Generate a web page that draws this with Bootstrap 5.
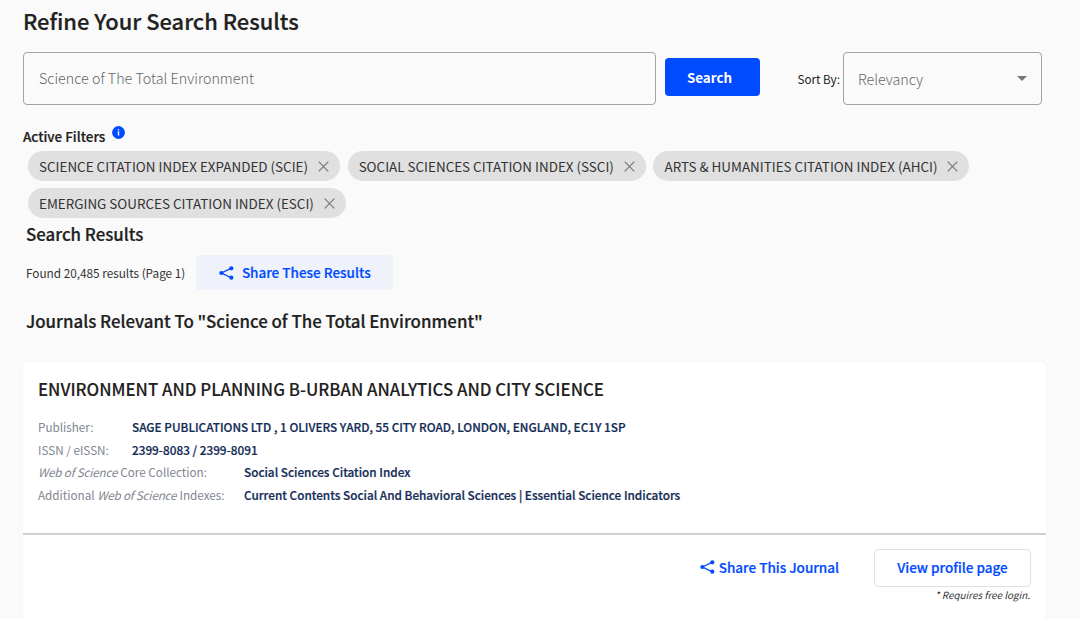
<!DOCTYPE html>
<html lang="en">
<head>
<meta charset="utf-8">
<meta name="viewport" content="width=device-width, initial-scale=1">
<title>Journal search results</title>
<link href="https://cdn.jsdelivr.net/npm/bootstrap@5.3.0/dist/css/bootstrap.min.css" rel="stylesheet">
<style>
body{background:#fafafa;color:#212121;font-family:"Noto Sans CJK SC",sans-serif;font-size:11.7px;overflow:hidden;height:619px}
.page{padding:6px 33px 0 23px}
.page h1,.page h2,.filters-label,.meta dd,.btn-share span,.share-link span,.btn-profile{-webkit-text-stroke:.22px currentColor}
.page h1{font-size:21.9px;line-height:30px;font-weight:500;margin:0 0 16px}
.page h2{font-size:16.85px;line-height:24px;font-weight:500}
.search-row{height:53px}
.search-box{width:633px;height:53px;border:1px solid #a3a3a3;border-radius:4px;background:#fafafa;padding:0 14px 3px 15px;font-size:14.3px;font-weight:300;color:#666}
.search-box::placeholder{color:#666;opacity:1}
.btn-search{width:95px;height:38px;margin:-4px 37.5px 0 9px;background:#004bff;color:#fff;font-size:13.4px;font-weight:700;border-radius:4px;padding:0 6px 0 0;line-height:36px}
.sort-select{width:199px;height:53px;border:1px solid #a3a3a3;border-radius:4px;padding:0 14px;font-size:14.3px;font-weight:300;color:#666;margin-left:3px}
.filters-label{font-size:13.45px;line-height:20px;height:20px;font-weight:500;margin-top:21px}
.filters-label svg{margin-left:6.5px}
.chips{gap:7px 7.6px;padding-left:5px;margin-top:5px}
.chip{height:30px;border-radius:15px;background:#e0e0e0;font-size:13.43px;padding:0 11px;line-height:29px;color:#333;white-space:nowrap}
.chip svg{margin-left:10px}
.found{color:#333;font-size:11.77px}
.btn-share{width:197px;height:35px;background:#eff2fb;color:#004bff;font-size:13.5px;font-weight:500;border-radius:4px;padding:0;margin-left:11px}
.journal{height:270px;margin-top:29px;border:0;border-radius:4px;background:#fff;box-shadow:0 0 1px rgba(0,0,0,.12);width:1023px}
.journal h3{font-size:16.81px;line-height:24px;font-weight:500;margin:0 0 15px;color:#212121;-webkit-text-stroke:.12px currentColor}
.journal-top{height:173px;padding:15px 15px 0;border-bottom:2px solid #d0d0d0}
.meta{height:22.5px;line-height:22px;white-space:nowrap}
.meta dt{font-weight:400;color:#808690}
.meta dt i{letter-spacing:-.2px;margin-right:.5px}
.meta dd{font-weight:500;font-size:11.78px;color:#132c57;margin:0}
.k1{width:94px}.k2{width:206px}
.journal-foot{padding:14px 15px 0}
.share-link{color:#004bff;font-size:13.5px;font-weight:500;margin:-2px 35px 0 0;text-decoration:none}
.btn-profile{width:157px;height:38px;border:1px solid #e0e0e0;border-radius:4px;background:#fff;color:#004bff;font-size:13.5px;font-weight:500;padding:0 0 2px}
.login-note{font-size:9.85px;line-height:18px;font-style:italic;color:#333;margin:-1px 1px 0 0}
</style>
</head>
<body>
<main class="page">
<h1>Refine Your Search Results</h1>
<div class="search-row d-flex align-items-center">
<input class="search-box" type="text" placeholder="Science of The Total Environment" aria-label="Search">
<button class="btn btn-search border-0">Search</button>
<span class="sort-label">Sort By:</span>
<div class="sort-select d-flex align-items-center justify-content-between"><span>Relevancy</span><svg width="10" height="5" viewBox="0 0 10 5"><path d="M0 0h10L5 5z" fill="#757575"/></svg></div>
</div>
<div class="d-flex filters-label"><span>Active Filters</span>
<svg width="13" height="13" viewBox="0 0 13 13"><circle cx="6.5" cy="6.5" r="6.4" fill="#004bff"/><path d="M6.5 5.4v4.1" fill="none" stroke="#fff" stroke-width="1.4"/><path d="M5.8 3.2h1.4v1.3H5.8z" fill="#fff"/></svg></div>
<div class="chips d-flex flex-wrap">
<div class="chip d-flex align-items-center"><span>SCIENCE CITATION INDEX EXPANDED (SCIE)</span><svg width="11" height="11" viewBox="0 0 11 11"><path d="M.7.7l9.6 9.6M10.3.7L.7 10.3" stroke="#777" stroke-width="1.2"/></svg></div>
<div class="chip d-flex align-items-center"><span>SOCIAL SCIENCES CITATION INDEX (SSCI)</span><svg width="11" height="11" viewBox="0 0 11 11"><path d="M.7.7l9.6 9.6M10.3.7L.7 10.3" stroke="#777" stroke-width="1.2"/></svg></div>
<div class="chip d-flex align-items-center"><span>ARTS &amp; HUMANITIES CITATION INDEX (AHCI)</span><svg width="11" height="11" viewBox="0 0 11 11"><path d="M.7.7l9.6 9.6M10.3.7L.7 10.3" stroke="#777" stroke-width="1.2"/></svg></div>
<div class="chip d-flex align-items-center"><span>EMERGING SOURCES CITATION INDEX (ESCI)</span><svg width="11" height="11" viewBox="0 0 11 11"><path d="M.7.7l9.6 9.6M10.3.7L.7 10.3" stroke="#777" stroke-width="1.2"/></svg></div>
</div>
<div class="results-head" style="padding-left:3px">
<h2 style="margin:4px 0 9px">Search Results</h2>
<div class="d-flex align-items-center"><span class="found">Found 20,485 results (Page 1)</span>
<button class="btn btn-share border-0 d-flex align-items-center justify-content-center"><svg class="me-2" width="15" height="14" viewBox="0 0 15 14"><path d="M12.5 2.2L2.5 7l10 4.8" fill="none" stroke="#004bff" stroke-width="1.3"/><circle cx="12.3" cy="2.3" r="2.1" fill="#004bff"/><circle cx="2.4" cy="7" r="2.1" fill="#004bff"/><circle cx="12.3" cy="11.7" r="2.1" fill="#004bff"/></svg><span>Share These Results</span></button></div>
<h2 style="margin:19px 0 0">Journals Relevant To "Science of The Total Environment"</h2>
</div>
<article class="journal card">
<div class="journal-top">
<h3>ENVIRONMENT AND PLANNING B-URBAN ANALYTICS AND CITY SCIENCE</h3>
<dl class="m-0">
<div class="meta d-flex"><dt class="k1">Publisher:</dt><dd>SAGE PUBLICATIONS LTD , 1 OLIVERS YARD, 55 CITY ROAD, LONDON, ENGLAND, EC1Y 1SP</dd></div>
<div class="meta d-flex"><dt class="k1">ISSN / eISSN:</dt><dd>2399-8083 / 2399-8091</dd></div>
<div class="meta d-flex"><dt class="k2"><i>Web of Science</i> Core Collection:</dt><dd>Social Sciences Citation Index</dd></div>
<div class="meta d-flex"><dt class="k2">Additional <i>Web of Science</i> Indexes:</dt><dd>Current Contents Social And Behavioral Sciences | Essential Science Indicators</dd></div>
</dl>
</div>
<div class="journal-foot">
<div class="d-flex justify-content-end align-items-center">
<a class="share-link d-flex align-items-center"><svg width="15" height="14" viewBox="0 0 15 14" style="margin-right:4px"><path d="M12.5 2.2L2.5 7l10 4.8" fill="none" stroke="#004bff" stroke-width="1.3"/><circle cx="12.3" cy="2.3" r="2.1" fill="#004bff"/><circle cx="2.4" cy="7" r="2.1" fill="#004bff"/><circle cx="12.3" cy="11.7" r="2.1" fill="#004bff"/></svg><span>Share This Journal</span></a>
<button class="btn btn-profile">View profile page</button>
</div>
<div class="login-note text-end">* Requires free login.</div>
</div>
</article>
</main>
<script src="https://cdn.jsdelivr.net/npm/bootstrap@5.3.0/dist/js/bootstrap.bundle.min.js"></script>
</body>
</html>
